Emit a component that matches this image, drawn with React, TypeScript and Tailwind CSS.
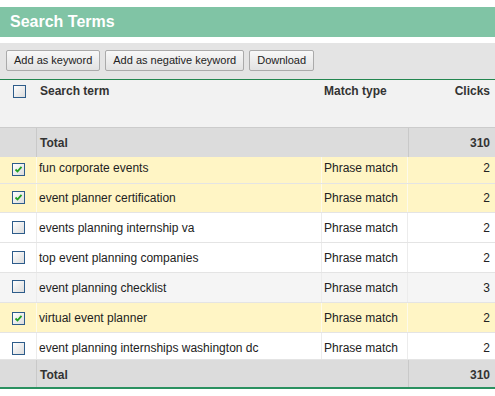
import React from "react";

type Row = {
  term: string;
  match: string;
  clicks: number;
  checked: boolean;
  hover?: boolean;
  h: string;
  textPt: string;
  boxPt: string;
};

const rows: Row[] = [
  { term: "fun corporate events", match: "Phrase match", clicks: 2, checked: true, h: "h-[27px]", textPt: "pt-[4px]", boxPt: "pt-[6px]" },
  { term: "event planner certification", match: "Phrase match", clicks: 2, checked: true, h: "h-[29px]", textPt: "pt-[7px]", boxPt: "pt-[7px]" },
  { term: "events planning internship va", match: "Phrase match", clicks: 2, checked: false, h: "h-[30px]", textPt: "pt-[8px]", boxPt: "pt-[8px]" },
  { term: "top event planning companies", match: "Phrase match", clicks: 2, checked: false, h: "h-[30px]", textPt: "pt-[8px]", boxPt: "pt-[8px]" },
  { term: "event planning checklist", match: "Phrase match", clicks: 3, checked: false, hover: true, h: "h-[30px]", textPt: "pt-[8px]", boxPt: "pt-[7px]" },
  { term: "virtual event planner", match: "Phrase match", clicks: 2, checked: true, h: "h-[30px]", textPt: "pt-[8px]", boxPt: "pt-[9px]" },
  { term: "event planning internships washington dc", match: "Phrase match", clicks: 2, checked: false, h: "h-[27px]", textPt: "pt-[8px]", boxPt: "pt-[9px]" },
];

function Checkbox({ checked }: { checked: boolean }) {
  return (
    <div className="w-[13px] h-[13px] border border-[#2d5c8a] bg-gradient-to-br from-white to-[#dcdcdc] flex items-center justify-center">
      {checked && (
        <svg width="9" height="9" viewBox="0 0 9 9">
          <path d="M1.5 4.5 L3.5 6.5 L7.5 1.8" fill="none" stroke="#22a022" strokeWidth="1.8" />
        </svg>
      )}
    </div>
  );
}

function ToolButton({ label }: { label: string }) {
  return (
    <button className="h-[21px] px-[7px] border border-[#aaaaaa] rounded-[2px] bg-gradient-to-b from-[#f8f8f8] to-[#e2e2e2] text-[11px] text-[#222] leading-none">
      {label}
    </button>
  );
}

function TotalRow({ last }: { last?: boolean }) {
  return (
    <div
      className={`grid grid-cols-[37px_285px_86px_87px] h-[29px] bg-[#dcdcdc] font-bold text-[#333] ${
        last ? "border-b-2 border-[#2a9160]" : ""
      }`}
    >
      <div className="border-r border-[#c9c9c9]"></div>
      <div className="col-span-2 pl-[3px] pt-[8px]">Total</div>
      <div className="border-l border-[#c9c9c9] text-right pr-[5px] pt-[8px]">310</div>
    </div>
  );
}

export default function App() {
  return (
    <div className="w-[495px] h-[396px] bg-white overflow-hidden text-[12px] leading-[14px] text-[#222] font-['Liberation_Sans',Arial,sans-serif]">
      <div className="h-[7px]"></div>
      <div className="h-[30px] bg-[#80c4a5] flex items-center px-[10px]">
        <span className="text-white font-bold text-[16px] leading-none">Search Terms</span>
      </div>
      <div className="h-[6px]"></div>
      <div className="h-[37px] bg-[#e4e4e4] border-b border-[#23864f] flex items-center gap-[5px] px-[6px] pb-px">
        <ToolButton label="Add as keyword" />
        <ToolButton label="Add as negative keyword" />
        <ToolButton label="Download" />
      </div>

      <div className="grid grid-cols-[37px_285px_86px_87px] h-[48px] bg-[#f2f2f2] border-b border-[#cccccc] font-bold text-[#333]">
        <div className="flex justify-center pt-[5px] pl-px">
          <Checkbox checked={false} />
        </div>
        <div className="pl-[3px] pt-[4px]">Search term</div>
        <div className="pl-[2px] pt-[4px]">Match type</div>
        <div className="text-right pr-[5px] pt-[4px]">Clicks</div>
      </div>

      <TotalRow />

      {rows.map((r) => {
        const bg = r.checked ? "bg-[#fff5c5]" : r.hover ? "bg-[#f5f5f5]" : "bg-white";
        const divider = r.checked ? "border-[#fdfaeb]" : "border-[#ececec]";
        return (
          <div
            key={r.term}
            className={`grid grid-cols-[37px_285px_86px_87px] ${r.h} border-b border-[#e4e4e4] ${bg}`}
          >
            <div className={`flex justify-center pl-px ${r.boxPt} border-r ${divider}`}>
              <Checkbox checked={r.checked} />
            </div>
            <div className={`pl-[2px] ${r.textPt} border-r ${divider} whitespace-nowrap`}>{r.term}</div>
            <div className={`pl-[2px] ${r.textPt} border-r ${divider}`}>{r.match}</div>
            <div className={`text-right pr-[5px] ${r.textPt}`}>{r.clicks}</div>
          </div>
        );
      })}

      <TotalRow last />
    </div>
  );
}
